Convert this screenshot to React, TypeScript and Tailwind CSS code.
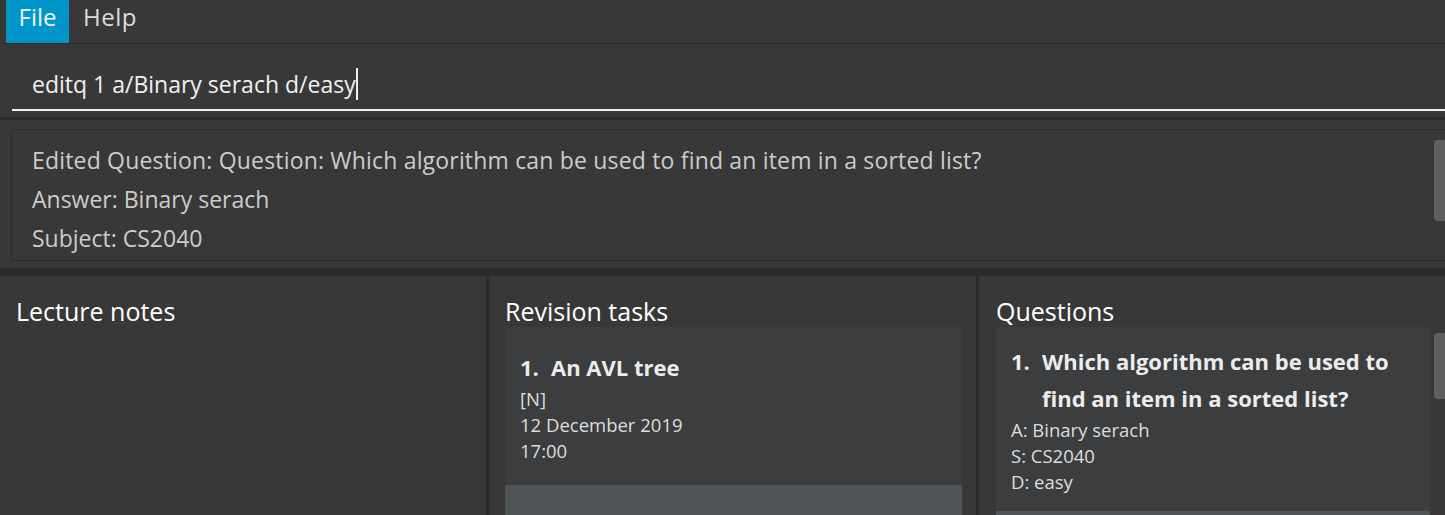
import React from "react";

const font = { fontFamily: '"Open Sans", "Noto Sans", sans-serif' };

const Header: React.FC<{ title: string; pl: string }> = ({ title, pl }) => (
  <div className={`h-[51px] flex items-end pb-[3px] ${pl} text-[25px] text-white leading-none`}>{title}</div>
);

export default function App() {
  return (
    <div className="w-[1445px] h-[515px] overflow-hidden bg-[#383838] flex flex-col" style={font}>
      {/* menu bar */}
      <div className="h-[44px] flex border-b border-[#2c2c2c] shrink-0">
        <div className="ml-[6px] w-[63px] h-[43px] bg-[#0096c9] text-[#f2f2f2] text-[24px] flex justify-center pt-[1px] leading-[32px]">File</div>
        <div className="px-[14px] h-[43px] text-[#dcdcdc] text-[24px] tracking-[0.5px] pt-[1px] leading-[32px]">Help</div>
      </div>

      {/* command box */}
      <div className="h-[76px] shrink-0 border-b-[3px] border-[#2d2d2d] pt-[22px] pl-[12px]">
        <div className="h-[45px] border-b-2 border-[#f0f0f0] pl-[20px] flex items-start">
          <span className="text-[23px] text-[#f0f0f0] leading-[36px]">editq 1 a/Binary serach d/easy</span>
          <span className="w-[2px] h-[32px] bg-[#f0f0f0] mt-[2px]"></span>
        </div>
      </div>

      {/* result box */}
      <div className="h-[156px] shrink-0 pt-[9px] pl-[11px] pb-[7px] border-b-[8px] border-[#2b2b2b]">
        <div className="h-[132px] border border-[#2b2b2b] border-r-0 flex">
          <div className="flex-1 pl-[20px] pt-[11px] text-[23px] text-[#cccccc] leading-[39px]">
            <div className="tracking-[0.18px]">Edited Question: Question: Which algorithm can be used to find an item in a sorted list?</div>
            <div>Answer: Binary serach</div>
            <div>Subject: CS2040</div>
          </div>
          <div className="w-[11px] pt-[10px]">
            <div className="h-[81px] bg-[#5f5f5f] rounded-l-[4px]"></div>
          </div>
        </div>
      </div>

      {/* panels */}
      <div className="flex-1 flex min-h-0">
        <div className="w-[486px] flex flex-col">
          <Header title="Lecture notes" pl="pl-[16px]" />
        </div>
        <div className="w-[3px] bg-[#2b2b2b]"></div>
        <div className="w-[487px] flex flex-col">
          <Header title="Revision tasks" pl="pl-[16px]" />
          <div className="ml-[16px] w-[457px] flex-1 flex flex-col">
            <div className="h-[158px] bg-[#3c3d3f] pl-[15px] pt-[26px] shrink-0">
              <div className="flex text-[22px] font-bold text-[#ececec] leading-[28px]">
                <span className="w-[31px]">1.</span>
                <span>An AVL tree</span>
              </div>
              <div className="text-[18.5px] text-[#dddddd] leading-[26px] mt-[5px]">
                <div>[N]</div>
                <div>12 December 2019</div>
                <div>17:00</div>
              </div>
            </div>
            <div className="flex-1 bg-[#4f5457]"></div>
          </div>
        </div>
        <div className="w-[3px] bg-[#2b2b2b]"></div>
        <div className="flex-1 flex flex-col">
          <Header title="Questions" pl="pl-[17px]" />
          <div className="flex-1 flex">
            <div className="ml-[17px] w-[434px] flex flex-col">
              <div className="h-[184px] bg-[#3c3d3f] pl-[15px] pt-[16px] shrink-0">
                <div className="flex text-[22px] font-bold text-[#ececec] leading-[37px]">
                  <span className="w-[31px] shrink-0">1.</span>
                  <span className="w-[370px]">Which algorithm can be used to find an item in a sorted list?</span>
                </div>
                <div className="text-[18.5px] text-[#dddddd] leading-[26px]">
                  <div>A: Binary serach</div>
                  <div>S: CS2040</div>
                  <div>D: easy</div>
                </div>
              </div>
              <div className="flex-1 bg-[#4f5457]"></div>
            </div>
            <div className="flex-1 pl-[4px] pt-[6px]">
              <div className="h-[66px] bg-[#5f5f5f] rounded-l-[4px]"></div>
            </div>
          </div>
        </div>
      </div>
    </div>
  );
}
